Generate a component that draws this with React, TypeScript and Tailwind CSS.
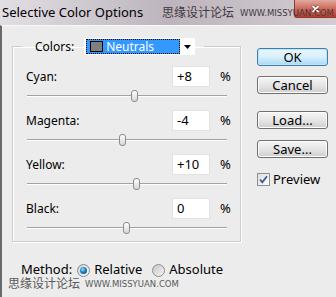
import React from "react";

const rows = [
  { label: "Cyan:", value: 8, text: "+8" },
  { label: "Magenta:", value: -4, text: "-4" },
  { label: "Yellow:", value: 10, text: "+10" },
  { label: "Black:", value: 0, text: "0" },
];

function Btn({ children, primary }: { children: React.ReactNode; primary?: boolean }) {
  return (
    <div
      className={
        "h-[18px] w-[71px] rounded-[3px] border flex items-center justify-center text-[13px] leading-none " +
        (primary
          ? "border-[#3c7fb1] bg-gradient-to-b from-[#eaf6fd] via-[#d9f0fc] to-[#a7d9f5] shadow-[inset_0_0_0_1px_#bfe3f7]"
          : "border-[#707070] bg-gradient-to-b from-[#f6f6f6] via-[#e6e6e6] to-[#cfcfcf] shadow-[inset_0_0_0_1px_#fcfcfc]")
      }
    >
      {children}
    </div>
  );
}

function SliderRow({ label, value, text }: { label: string; value: number; text: string }) {
  return (
    <div className="flex flex-col">
      <div className="flex items-center h-[21px]">
        <span className="flex-1">{label}</span>
        <div className="w-[38px] h-[21px] bg-white border border-[#e2e2e2] flex items-center pl-[4px] text-[13px]">
          {text}
        </div>
        <span className="ml-[10px] w-[12px] text-[13px]">%</span>
      </div>
      <div className="relative h-[18px] mr-[5px] ml-[1px]">
        <div className="absolute left-0 right-0 top-[8px] h-[1px] bg-[#a3a3a3] shadow-[0_1px_0_#ffffff]" />
        <div
          className="absolute top-[3px] w-[7px] h-[12px] rounded-[3px] border border-[#8c8c8c] bg-gradient-to-b from-white to-[#d6d6d6]"
          style={{ left: 99 + value - 3.5 }}
        />
      </div>
    </div>
  );
}

export default function App() {
  return (
    <div className="relative w-[336px] h-[297px] overflow-hidden bg-[#ececec] text-[12px] text-black font-['Noto_Sans',sans-serif]">
      {/* title bar */}
      <div className="relative h-[25px] flex items-start bg-gradient-to-r from-[#e2dfe4] via-[#bdb4bd] to-[#d3ccd0]">
        <span className="pl-[2px] pt-[3px] text-[13px] leading-[18px] text-black whitespace-nowrap">Selective Color Options</span>
        <div className="ml-auto w-[42px] h-[18px] border-l border-b border-[#8a3b33] rounded-bl-[3px] bg-gradient-to-b from-[#dfaaa0] via-[#cf6a5c] to-[#b8382b] flex items-center justify-center">
          <span className="text-white font-bold text-[11px] leading-[14px] [text-shadow:0_0_2px_#400]">✕</span>
        </div>
        <div className="absolute left-[162px] top-[5px] flex items-end gap-[6px] text-[#3e3a3e] whitespace-nowrap">
          <span className="text-[12px] leading-[14px] font-['Noto_Sans_CJK_SC',sans-serif]">思缘设计论坛</span>
          <span className="text-[8.5px] leading-[12px] font-['DejaVu_Sans',sans-serif]">WWW.MISSYUAN.COM</span>
        </div>
      </div>
      {/* body */}
      <div className="flex h-[272px] border-l-[2px] border-[#6a6a6a] border-t border-t-[#f8f8f8]">
        <div className="flex flex-col ml-[10px] mt-[12px]">
          <fieldset className="w-[229px] h-[204px] border border-[#cdcdcd] shadow-[inset_1px_1px_0_#ffffff,1px_1px_0_#ffffff] pl-[13px] pr-[8px]">
            <legend className="-ml-[4px] pl-[13px] pr-[9px] flex items-center h-[17px]">
              <span className="mr-[10px]">Colors:</span>
              <div className="w-[111px] h-[17px] bg-white flex items-center pl-[2px]">
                <div className="flex-1 h-[15px] bg-[#3399ff] border border-dotted border-black flex items-center pl-[3px]">
                  <div className="w-[13px] h-[11px] bg-[#7f7f7f] border border-black" />
                  <span className="ml-[3px] text-white">Neutrals</span>
                </div>
                <svg width="15" height="15" viewBox="0 0 15 15">
                  <path d="M4 6 L11 6 L7.5 10 Z" fill="#000" />
                </svg>
              </div>
            </legend>
            <div className="flex flex-col gap-[5px] pt-[11px]">
              {rows.map((r) => (
                <SliderRow key={r.label} {...r} />
              ))}
            </div>
          </fieldset>
          <div className="flex items-center h-[20px] mt-[18px] ml-[9px] text-[13px]">
            <span>Method:</span>
            <svg className="ml-[5px]" width="13" height="13" viewBox="0 0 13 13">
              <defs>
                <radialGradient id="rb" cx="0.4" cy="0.35" r="0.7">
                  <stop offset="0" stopColor="#9fdcff" />
                  <stop offset="0.5" stopColor="#2a8ccf" />
                  <stop offset="1" stopColor="#0f4d7d" />
                </radialGradient>
                <linearGradient id="rg" x1="0" y1="0" x2="1" y2="1">
                  <stop offset="0" stopColor="#d0d0d0" />
                  <stop offset="1" stopColor="#ffffff" />
                </linearGradient>
              </defs>
              <circle cx="6.5" cy="6.5" r="6" fill="url(#rg)" stroke="#7f8c96" />
              <circle cx="6.5" cy="6.5" r="3.5" fill="url(#rb)" />
            </svg>
            <span className="ml-[4px]">Relative</span>
            <svg className="ml-[10px]" width="13" height="13" viewBox="0 0 13 13">
              <defs>
                <linearGradient id="rg2" x1="0" y1="0" x2="1" y2="1">
                  <stop offset="0" stopColor="#c4c4c4" />
                  <stop offset="1" stopColor="#f6f6f6" />
                </linearGradient>
              </defs>
              <circle cx="6.5" cy="6.5" r="6" fill="url(#rg2)" stroke="#8e8f8f" />
            </svg>
            <span className="ml-[4px]">Absolute</span>
          </div>
        </div>
        <div className="flex flex-col ml-[16px] mt-[22px]">
          <Btn primary>OK</Btn>
          <div className="mt-[10px]">
            <Btn>Cancel</Btn>
          </div>
          <div className="mt-[17px]">
            <Btn>Load...</Btn>
          </div>
          <div className="mt-[11px]">
            <Btn>Save...</Btn>
          </div>
          <div className="flex items-center mt-[12px] text-[13px]">
            <svg width="13" height="13" viewBox="0 0 13 13">
              <defs>
                <linearGradient id="cb" x1="0" y1="0" x2="1" y2="1">
                  <stop offset="0" stopColor="#dcdcdc" />
                  <stop offset="1" stopColor="#ffffff" />
                </linearGradient>
              </defs>
              <rect x="0.5" y="0.5" width="12" height="12" fill="url(#cb)" stroke="#8e8f8f" />
              <path d="M3 6.5 L5.3 9.3 L10 3.2" fill="none" stroke="#3f5a98" strokeWidth="1.8" />
            </svg>
            <span className="ml-[3px]">Preview</span>
          </div>
        </div>
      </div>
      {/* bottom watermark */}
      <div className="absolute left-[8px] top-[276px] flex items-end gap-[5px] text-[#5a5a5a] whitespace-nowrap">
        <span className="text-[12px] leading-[14px] font-['Noto_Sans_CJK_SC',sans-serif]">思缘设计论坛</span>
        <span className="text-[8.5px] leading-[12px] font-['DejaVu_Sans',sans-serif]">WWW.MISSYUAN.COM</span>
      </div>
    </div>
  );
}
